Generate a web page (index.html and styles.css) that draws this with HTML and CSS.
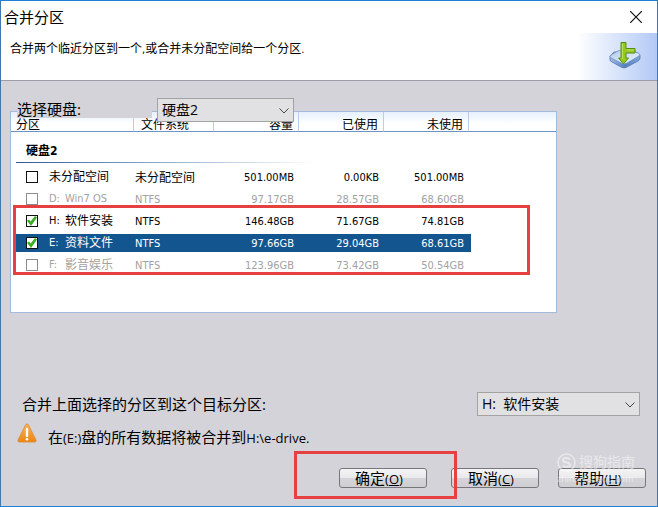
FILE: index.html
```html
<!DOCTYPE html>
<html lang="zh-CN">
<head>
<meta charset="utf-8">
<title>合并分区</title>
<link rel="stylesheet" href="styles.css">
</head>
<body>
<main class="dialog">
  <header class="titlebar">
    <h1 class="title">合并分区</h1>
    <button class="close" type="button" aria-label="关闭">
      <svg width="12" height="12" viewBox="0 0 12 12"><path d="M0 0L12 12M12 0L0 12" stroke="#111" stroke-width="1.2"/></svg>
    </button>
  </header>
  <section class="banner">
    <p class="intro">合并两个临近分区到一个<span class="small">,</span>或合并未分配空间给一个分区<span class="small">.</span></p>
    <svg class="disk" width="34" height="32" viewBox="0 0 34 32">
      <defs>
        <linearGradient id="top" x1="0" y1="0" x2="1" y2="1"><stop offset="0" stop-color="#b4cbea"/><stop offset="1" stop-color="#eef5ff"/></linearGradient>
        <linearGradient id="side" x1="0" y1="0" x2="1" y2="0"><stop offset="0" stop-color="#a3bde2"/><stop offset=".5" stop-color="#557fbe"/><stop offset="1" stop-color="#7fa5d8"/></linearGradient>
      </defs>
      <path d="M1 17V21Q1 22 3 23L12 28Q15 30 18 28L29 22Q31 21 31 19V16L27 13H5Z" fill="url(#side)" stroke="#5379b5" stroke-width=".8"/>
      <path d="M2 16L9 12Q11 11 14 11H20L29 14Q32 15 30 17L18 24Q15 26 12 24L2 19Q0 17 2 16Z" fill="url(#top)" stroke="#6b93cc" stroke-width=".8"/>
      <path d="M12 3.500H17V9.500H26V14H17V19H19.500L14.500 25L9.500 19H12Z" fill="#96c822" stroke="#568e14" stroke-width="1"/>
      <path d="M13.500 5V20M17.500 11H25" stroke="#bfe05a"/>
    </svg>
  </section>

  <section class="content">
    <div class="pick">
      <label class="pick-label" for="disk">选择硬盘:</label>
      <div class="combo combo-disk">
        <select id="disk"><option>硬盘2</option></select>
        <svg class="arrow" width="10" height="6" viewBox="0 0 10 6"><path d="M.5 .5L5 5L9.500 .5" fill="none" stroke="#444"/></svg>
      </div>
    </div>

    <div class="list">
      <table>
        <colgroup><col class="c-name"><col class="c-fs"><col class="c-size"><col class="c-size"><col class="c-size"><col></colgroup>
        <thead>
          <tr><th>分区</th><th>文件系统</th><th class="num">容量</th><th class="num">已使用</th><th class="num">未使用</th><th class="rest"></th></tr>
        </thead>
        <tbody>
          <tr class="group"><td colspan="6">硬盘2</td></tr>
          <tr><td><label class="name"><input type="checkbox">未分配空间</label></td><td class="cjk">未分配空间</td><td class="num">501.00MB</td><td class="num">0.00KB</td><td class="num">501.00MB</td><td></td></tr>
          <tr class="off"><td><label class="name"><input type="checkbox" disabled><span class="drive">D:</span><span class="small">Win7 OS</span></label></td><td>NTFS</td><td class="num">97.17GB</td><td class="num">28.57GB</td><td class="num">68.60GB</td><td></td></tr>
          <tr><td><label class="name"><input type="checkbox" checked><span class="drive">H:</span>软件安装</label></td><td>NTFS</td><td class="num">146.48GB</td><td class="num">71.67GB</td><td class="num">74.81GB</td><td></td></tr>
          <tr class="selected"><td><label class="name"><input type="checkbox" checked><span class="drive">E:</span>资料文件</label></td><td>NTFS</td><td class="num">97.66GB</td><td class="num">29.04GB</td><td class="num">68.61GB</td><td></td></tr>
          <tr class="off"><td><label class="name"><input type="checkbox" disabled><span class="drive">F:</span>影音娱乐</label></td><td>NTFS</td><td class="num">123.96GB</td><td class="num">73.42GB</td><td class="num">50.54GB</td><td></td></tr>
        </tbody>
      </table>
      <div class="mark mark-rows"></div>
    </div>

    <div class="target">
      <label for="target">合并上面选择的分区到这个目标分区:</label>
      <div class="combo combo-target">
        <select id="target"><option>H:&nbsp; 软件安装</option></select>
        <svg class="arrow" width="10" height="6" viewBox="0 0 10 6"><path d="M.5 .5L5 5L9.500 .5" fill="none" stroke="#444"/></svg>
      </div>
    </div>

    <div class="warning">
      <svg width="20" height="20" viewBox="0 0 20 20">
        <defs><linearGradient id="warn" x1="0" y1="0" x2="0" y2="1"><stop offset="0" stop-color="#f7b458"/><stop offset="1" stop-color="#ee8512"/></linearGradient></defs>
        <path d="M8.800 1.500Q10 0 11.200 1.500L19 17Q19.500 19 18 19H2Q.5 19 1 17Z" fill="url(#warn)" stroke="#d98a35" stroke-width=".8"/>
        <path d="M10 6V13" stroke="#fff" stroke-width="2.400" stroke-linecap="round"/><circle cx="10" cy="16.200" r="1.300" fill="#fff"/>
      </svg>
      <p>在<span class="latin">(E:)</span>盘的所有数据将被合并到<span class="latin">H:\e-drive.</span></p>
    </div>
  </section>

  <footer class="actions">
    <div class="confirm">
      <button class="btn" type="button">确定<span class="latin">(<u>O</u>)</span></button>
      <div class="mark mark-confirm"></div>
    </div>
    <button class="btn" type="button">取消<span class="latin">(<u>C</u>)</span></button>
    <button class="btn" type="button">帮助<span class="latin">(<u>H</u>)</span></button>
    <div class="watermark">
      <div class="brand">
        <svg width="19" height="19" viewBox="0 0 19 19"><circle cx="9.500" cy="9.500" r="8.500" fill="none" stroke="#fff" stroke-width="1.500"/><path d="M13 6.500Q12 5 9.500 5Q6 5 6 7Q6 9 9.500 9.500Q13 10 13 12Q13 14 9.500 14Q7 14 6 12.500" fill="none" stroke="#fff" stroke-width="2"/></svg>
        <span>搜狗指南</span>
      </div>
      <span class="site">zhinan.sogou.com</span>
    </div>
  </footer>
</main>
</body>
</html>
```
FILE: styles.css
```css
* { box-sizing: border-box; }

body {
  margin: 0;
  color: #000;
  font: 15px/20px "Open Sans", "Noto Sans CJK SC", sans-serif;
}

h1, p { margin: 0; font-weight: 400; }

.dialog {
  display: flex;
  flex-direction: column;
  min-height: 100vh;
  background: #d4d3d9;
  border: 1px solid #1c80d8;
  border-left-color: #3f78ad;
}

.titlebar {
  display: flex;
  align-items: center;
  justify-content: space-between;
  height: 32px;
  padding: 0 14px 0 3px;
  background: #fff;
}

.title { font-size: 15px; }

.close {
  display: flex;
  padding: 1px;
  border: 0;
  background: none;
}

.banner {
  display: flex;
  justify-content: space-between;
  height: 48px;
  padding: 6px 14px 0 9px;
  border-bottom: 1px solid #9a9ba5;
  background: linear-gradient(to left, #b3c9f6, #fff 80px);
}

.intro { font-size: 12px; }
.small { font-family: "DejaVu Sans Condensed", sans-serif; font-size: 11px; }

.content { flex: 1; padding: 17px 17px 0 9px; }

.pick {
  position: relative;
  z-index: 1;
  display: flex;
  gap: 5px;
  width: fit-content;
  margin-left: 7px;
}

.pick-label {
  width: 135px;
  height: 20px;
  padding-top: 1px;
  background: #d4d3d9;
}

.combo { position: relative; height: 24px; }
.combo-disk { width: 137px; }
.combo-target { width: 163px; }

.combo select {
  width: 100%;
  height: 100%;
  padding: 0 4px;
  border: 1px solid #a3a3a6;
  border-radius: 0;
  background: #e1e1e3;
  color: #000;
  font: inherit;
  font-size: 14px;
  appearance: none;
}

.arrow { position: absolute; top: 10px; right: 5px; }

.list {
  position: relative;
  width: 87%;
  max-width: 547px;
  min-height: 202px;
  margin-top: -11px;
  border: 1px solid #a5b9dc;
  background: #fff;
}

table {
  width: 100%;
  border-collapse: separate;
  border-spacing: 0;
  table-layout: fixed;
  font-family: "DejaVu Sans Condensed", "Noto Sans CJK SC", sans-serif;
  font-size: 11px;
  line-height: 14px;
}

.c-name { width: 123px; }
.c-fs { width: 80px; }
.c-size { width: 85px; }

th {
  height: 20px;
  padding: 7px 5px 0 7px;
  border-right: 1px solid #b9cdeb;
  border-bottom: 1px solid #6c94c9;
  background: linear-gradient(#e6f0fd, #fff 12px);
  font-size: 12px;
  font-weight: 400;
  line-height: 12px;
  text-align: left;
}

th:first-child { padding-left: 5px; }
th.rest { border-right: 0; }

td {
  height: 22px;
  padding: 1px 5px 0 1px;
  white-space: nowrap;
}

td:first-child { padding: 0 0 0 15px; }
.num { text-align: right; }
.cjk, .name { font-size: 12px; }

.group td {
  height: 34px;
  background: linear-gradient(to right, #2c5a97, #fff) 5px 30px / 300px 1px no-repeat;
  font-size: 12px;
  font-weight: 700;
}

tbody .group td:first-child { padding-top: 4px; }

.selected {
  color: #fff;
  background: linear-gradient(#13568f, #13568f) 5px center / 455px 18px no-repeat;
}

.off { color: #a2a2a2; }

.name { display: flex; align-items: center; }
.drive { width: 16px; font-size: 11px; }

input[type="checkbox"] {
  flex: none;
  width: 12px;
  height: 12px;
  margin: 0 11px 0 0;
  border: 1px solid #111;
  background: #fff;
  appearance: none;
}

input[type="checkbox"]:disabled { border-color: #8c8c8c; }

input[type="checkbox"]:checked::before {
  content: "";
  display: block;
  width: 10px;
  height: 10px;
  background: #3cae25;
  clip-path: polygon(0 48%, 20% 36%, 36% 56%, 80% 0, 100% 14%, 40% 100%);
}

.mark {
  position: absolute;
  border: 3px solid #e64041;
  pointer-events: none;
}

.mark-rows { top: 93px; left: 2px; right: 26px; height: 70px; }
.mark-confirm { top: -17px; left: -45px; width: 163px; height: 48px; }

.target {
  display: flex;
  align-items: center;
  justify-content: space-between;
  margin: 79px 0 0 12px;
}

.warning {
  display: flex;
  gap: 11px;
  margin: 7px 0 0 7px;
}

.warning p { padding-top: 4px; }
.latin { font-size: 13px; }

.actions {
  position: relative;
  display: flex;
  justify-content: flex-end;
  gap: 19px;
  padding: 0 11px 18px;
}

.confirm { position: relative; z-index: 1; margin-right: 5px; }

.btn {
  display: block;
  width: 88px;
  height: 20px;
  padding: 0 8px 0 0;
  border: 1px solid #77777b;
  border-radius: 3px;
  background: linear-gradient(#f4f4f5, #e9e9eb 50%, #d5d5d9 50%, #cfcfd3);
  color: #000;
  font: inherit;
  line-height: 16px;
}

.watermark {
  position: absolute;
  right: 22px;
  bottom: 20px;
  color: #fff;
  opacity: .5;
  pointer-events: none;
}

.brand { display: flex; align-items: center; gap: 3px; font-size: 14px; }
.site { display: block; font-size: 9px; line-height: 14px; }
```
